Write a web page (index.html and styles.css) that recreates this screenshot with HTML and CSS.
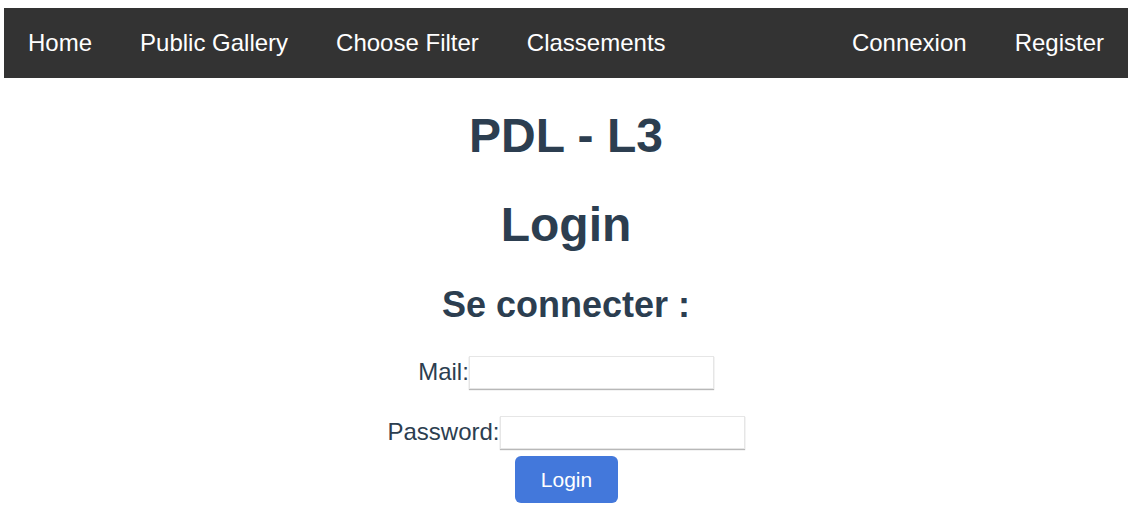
FILE: index.html
```html
<!DOCTYPE html>
<html lang="fr">
<head>
<meta charset="utf-8">
<title>PDL - L3</title>
<link rel="stylesheet" href="styles.css">
</head>
<body>
<nav class="topnav">
  <div class="nav-group">
    <a class="nav-link" href="#">Home</a>
    <a class="nav-link" href="#">Public Gallery</a>
    <a class="nav-link" href="#">Choose Filter</a>
    <a class="nav-link" href="#">Classements</a>
  </div>
  <div class="nav-group nav-right">
    <a class="nav-link" href="#">Connexion</a>
    <a class="nav-link" href="#">Register</a>
  </div>
</nav>
<main class="content">
  <h1 class="site-title">PDL - L3</h1>
  <h1 class="page-title">Login</h1>
  <h2 class="section-title">Se connecter :</h2>
  <form class="login-form">
    <div class="field-row row-mail">
      <label class="field-label" for="mail">Mail:</label>
      <input class="field-input" id="mail" type="text">
    </div>
    <div class="field-row row-pass">
      <label class="field-label" for="pass">Password:</label>
      <input class="field-input" id="pass" type="password">
    </div>
    <div class="button-row">
      <button class="login-button" type="button">Login</button>
    </div>
  </form>
</main>
</body>
</html>
```
FILE: styles.css
```css
html, body {
  background: #ffffff;
}
body {
  margin: 8px 8px 0 4px;
  font-family: "Liberation Sans", Arial, Helvetica, sans-serif;
}
.topnav {
  display: flex;
  height: 70px;
  background: #333333;
}
.nav-group {
  display: flex;
}
.nav-right {
  margin-left: auto;
}
.nav-link {
  display: block;
  padding: 0 24px;
  line-height: 70px;
  font-size: 24px;
  color: #ffffff;
  text-decoration: none;
}
.content {
  text-align: center;
  color: #2c3e50;
}
.site-title,
.page-title {
  font-size: 48px;
  line-height: 48px;
  font-weight: bold;
  margin: 0;
}
.site-title {
  margin-top: 34px;
}
.page-title {
  margin-top: 41px;
}
.section-title {
  font-size: 36px;
  line-height: 36px;
  font-weight: bold;
  margin: 38px 0 0;
}
.login-form {
  margin: 33px 0 0;
  display: flex;
  flex-direction: column;
  align-items: center;
}
.field-row {
  display: flex;
  justify-content: center;
  align-items: flex-start;
}
.row-mail {
  margin-bottom: 27px;
}
.field-label {
  font-size: 24px;
  line-height: 31px;
  color: #2c3e50;
}
.field-input {
  box-sizing: border-box;
  width: 245px;
  height: 33px;
  margin: 0;
  padding: 0 4px;
  border: 1px solid #e6e6e6;
  box-shadow: 0 1px 1px rgba(0, 0, 0, 0.28);
  background: #ffffff;
  font-size: 20px;
  outline: none;
}
.button-row {
  margin-top: 7px;
  display: flex;
  justify-content: center;
  padding-left: 1px;
}
.login-button {
  width: 103px;
  height: 47px;
  border: none;
  border-radius: 6px;
  background: #4378db;
  color: #ffffff;
  font-family: "Liberation Sans", Arial, Helvetica, sans-serif;
  font-size: 21px;
  padding: 0;
}
```
